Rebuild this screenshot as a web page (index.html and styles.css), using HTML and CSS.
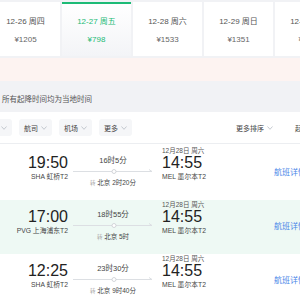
FILE: index.html
```html
<!DOCTYPE html>
<html lang="zh-CN">
<head>
    <meta charset="UTF-8">
    <meta name="viewport" content="width=device-width, initial-scale=1.0">
    <title>航班列表</title>
    <link rel="stylesheet" href="styles.css">
</head>
<body>
    <div class="dates">
        <div class="date-tab"><div class="day">12-26 周四</div><div class="price">¥1205</div></div>
        <div class="date-tab active"><div class="day">12-27 周五</div><div class="price">¥798</div></div>
        <div class="date-tab"><div class="day">12-28 周六</div><div class="price">¥1533</div></div>
        <div class="date-tab"><div class="day">12-29 周日</div><div class="price">¥1351</div></div>
        <div class="date-tab"><div class="day">12-30 周一</div><div class="price">¥1288</div></div>
    </div>

    <div class="tip-bar"></div>
    <div class="notice">所有起降时间均为当地时间</div>

    <div class="filters">
        <div class="filter-group">
            <span class="filter-btn">时间 <svg class="chev" width="6" height="4" viewBox="0 0 6 4"><polyline points="0.5,0.5 3,3.3 5.5,0.5"/></svg></span>
            <span class="filter-btn">航司 <svg class="chev" width="6" height="4" viewBox="0 0 6 4"><polyline points="0.5,0.5 3,3.3 5.5,0.5"/></svg></span>
            <span class="filter-btn">机场 <svg class="chev" width="6" height="4" viewBox="0 0 6 4"><polyline points="0.5,0.5 3,3.3 5.5,0.5"/></svg></span>
            <span class="filter-btn">更多 <svg class="chev" width="6" height="4" viewBox="0 0 6 4"><polyline points="0.5,0.5 3,3.3 5.5,0.5"/></svg></span>
        </div>
        <div class="sort-group">
            <span class="sort-btn">更多排序 <svg class="chev" width="6" height="4" viewBox="0 0 6 4"><polyline points="0.5,0.5 3,3.3 5.5,0.5"/></svg></span>
            <span class="sort-btn">起飞时间</span>
        </div>
    </div>

    <div class="flights">
        <div class="flight">
            <div class="dep">
                <div class="time">19:50</div>
                <div class="airport">SHA 虹桥T2</div>
            </div>
            <div class="mid">
                <div class="duration">16时5分</div>
                <svg class="track" width="80" height="7" viewBox="0 0 80 7">
                    <line x1="0" y1="3.5" x2="79" y2="3.5"/>
                    <polyline points="76,1.5 79,3.5"/>
                    <circle cx="41" cy="3.5" r="2"/>
                </svg>
                <div class="stop"><span class="zhuan">转</span> 北京 2时20分</div>
            </div>
            <div class="arr">
                <div class="arr-date">12月28日 周六</div>
                <div class="time">14:55</div>
                <div class="airport">MEL 墨尔本T2</div>
            </div>
            <div class="detail">航班详情</div>
        </div>

        <div class="flight green">
            <div class="dep">
                <div class="time">17:00</div>
                <div class="airport">PVG 上海浦东T2</div>
            </div>
            <div class="mid">
                <div class="duration">18时55分</div>
                <svg class="track" width="80" height="7" viewBox="0 0 80 7">
                    <line x1="0" y1="3.5" x2="79" y2="3.5"/>
                    <polyline points="76,1.5 79,3.5"/>
                    <circle cx="41" cy="3.5" r="2"/>
                </svg>
                <div class="stop"><span class="zhuan">转</span> 北京 5时</div>
            </div>
            <div class="arr">
                <div class="arr-date">12月28日 周六</div>
                <div class="time">14:55</div>
                <div class="airport">MEL 墨尔本T2</div>
            </div>
            <div class="detail">航班详情</div>
        </div>

        <div class="flight">
            <div class="dep">
                <div class="time">12:25</div>
                <div class="airport">SHA 虹桥T2</div>
            </div>
            <div class="mid">
                <div class="duration">23时30分</div>
                <svg class="track" width="80" height="7" viewBox="0 0 80 7">
                    <line x1="0" y1="3.5" x2="79" y2="3.5"/>
                    <polyline points="76,1.5 79,3.5"/>
                    <circle cx="41" cy="3.5" r="2"/>
                </svg>
                <div class="stop"><span class="zhuan">转</span> 北京 9时40分</div>
            </div>
            <div class="arr">
                <div class="arr-date">12月28日 周六</div>
                <div class="time">14:55</div>
                <div class="airport">MEL 墨尔本T2</div>
            </div>
            <div class="detail">航班详情</div>
        </div>
    </div>
</body>
</html>
```

FILE: styles.css
```css
* {
    box-sizing: border-box;
    margin: 0;
    padding: 0;
}

body {
    width: 300px;
    height: 300px;
    overflow: hidden;
    background-color: #f1f2f5;
    font-family: "Liberation Sans", "Noto Sans CJK SC", sans-serif;
    color: #333;
}

/* date strip */
.dates {
    display: flex;
    gap: 2px;
    padding-top: 2px;
    margin-left: -9px;
    height: 56px;
}

.date-tab {
    flex: 0 0 69px;
    background-color: #fff;
    text-align: center;
    padding-top: 15px;
}

.date-tab .day {
    font-size: 8px;
    line-height: 10px;
    color: #555;
}

.date-tab .price {
    font-size: 8px;
    line-height: 10px;
    margin-top: 8px;
    color: #666;
}

.date-tab.active {
    background: linear-gradient(#fff, #f3f4f7);
    border-top: 2px solid #1dbb76;
    padding-top: 13px;
}

.date-tab.active .day,
.date-tab.active .price {
    color: #1dbb76;
}

.tip-bar {
    margin-top: 2px;
    height: 23px;
    background-color: #fdf3f1;
}

.notice {
    height: 31px;
    padding: 14px 0 0 2px;
    font-size: 7.5px;
    line-height: 10px;
    color: #555;
}

/* filter bar */
.filters {
    display: flex;
    height: 32px;
    padding-top: 7px;
    background-color: #fff;
    border-bottom: 1px solid #eceef1;
}

.filter-group {
    display: flex;
    flex-shrink: 0;
    gap: 7px;
    margin-left: -21px;
}

.filter-btn,
.sort-btn {
    display: flex;
    flex-shrink: 0;
    align-items: center;
    gap: 3px;
    height: 17px;
    padding: 0 5px;
    font-size: 7px;
    color: #444;
    white-space: nowrap;
}

.filter-btn {
    background-color: #f5f6f8;
    border-radius: 3px;
}

.sort-group {
    display: flex;
    flex-shrink: 0;
    gap: 12px;
    margin-left: 99px;
}

.chev {
    fill: none;
    stroke: #b8bcc4;
    stroke-width: 0.8;
}

/* flight rows */
.flights {
    background-color: #fff;
    padding-top: 2px;
}

.flight {
    display: flex;
    height: 54px;
    background-color: #fff;
}

.flight > div {
    flex-shrink: 0;
}

.flight.green {
    background-color: #eef9f4;
}

.dep {
    width: 68px;
    text-align: right;
    padding-top: 9px;
    white-space: nowrap;
}

.time {
    font-size: 16px;
    line-height: 15px;
    color: #222;
}

.airport {
    font-size: 6.8px;
    line-height: 10px;
    margin-top: 2px;
    color: #444;
    white-space: nowrap;
}

.mid {
    width: 80px;
    margin-left: 5px;
    text-align: center;
    padding-top: 10px;
}

.duration {
    font-size: 7.5px;
    line-height: 9px;
    color: #444;
}

.track {
    display: block;
    margin-top: 3px;
}

.track line,
.track polyline {
    stroke: #dcdfe3;
    stroke-width: 1;
    fill: none;
}

.track circle {
    fill: #fff;
    stroke: #c9ccd1;
    stroke-width: 0.8;
}

.stop {
    margin-top: 4px;
    font-size: 6.5px;
    line-height: 8px;
    color: #444;
    white-space: nowrap;
}

.zhuan {
    color: #aaa;
    font-size: 5.5px;
}

.arr {
    width: 112px;
    margin-left: 9px;
    padding-top: 1px;
}

.arr-date {
    font-size: 6.5px;
    line-height: 8px;
    color: #555;
    white-space: nowrap;
}

.arr .time {
    margin-top: 0;
}

.detail {
    padding-top: 22px;
    font-size: 8px;
    line-height: 10px;
    color: #4a86e8;
    white-space: nowrap;
}
```
